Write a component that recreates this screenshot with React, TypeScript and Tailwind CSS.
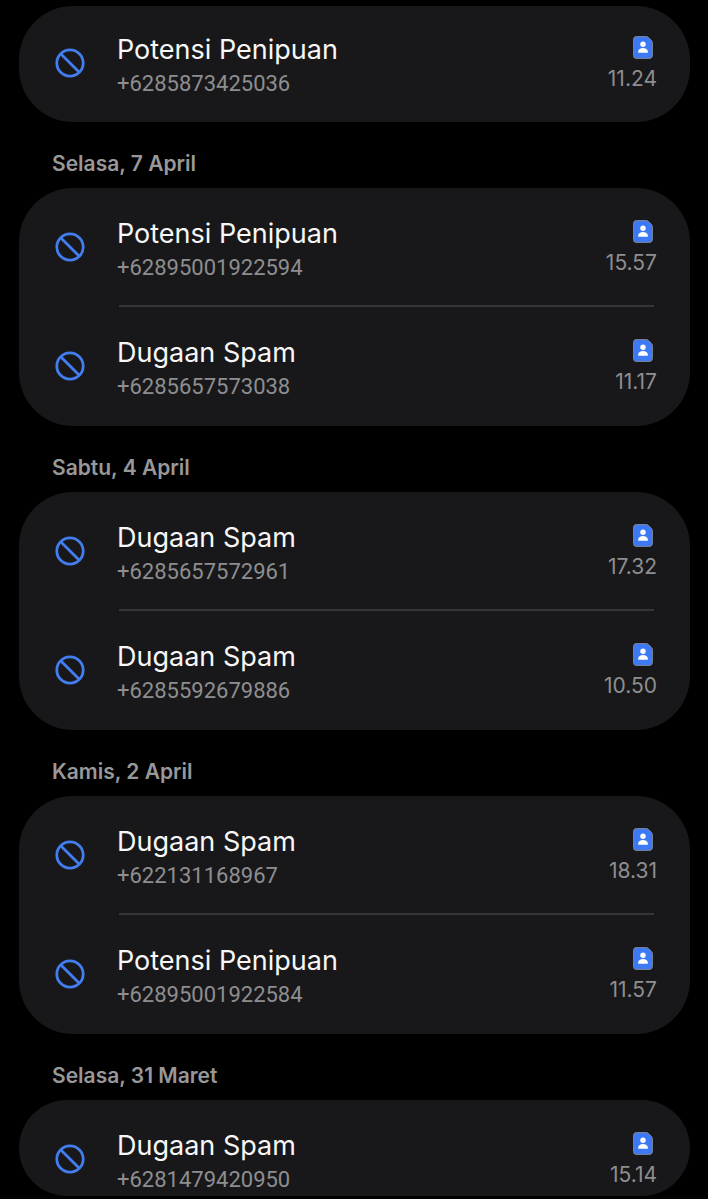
type Call = { name: string; number: string; time: string };

const groups: { date?: string; calls: Call[] }[] = [
    { calls: [{ name: 'Potensi Penipuan', number: '+6285873425036', time: '11.24' }] },
    {
        date: 'Selasa, 7 April',
        calls: [
            { name: 'Potensi Penipuan', number: '+62895001922594', time: '15.57' },
            { name: 'Dugaan Spam', number: '+6285657573038', time: '11.17' }
        ]
    },
    {
        date: 'Sabtu, 4 April',
        calls: [
            { name: 'Dugaan Spam', number: '+6285657572961', time: '17.32' },
            { name: 'Dugaan Spam', number: '+6285592679886', time: '10.50' }
        ]
    },
    {
        date: 'Kamis, 2 April',
        calls: [
            { name: 'Dugaan Spam', number: '+622131168967', time: '18.31' },
            { name: 'Potensi Penipuan', number: '+62895001922584', time: '11.57' }
        ]
    },
    {
        date: 'Selasa, 31 Maret',
        calls: [{ name: 'Dugaan Spam', number: '+6281479420950', time: '15.14' }]
    }
];

function BlockedIcon() {
    return (
        <svg
            viewBox="0 0 30 30"
            className="mt-11 h-[30px] w-[30px] shrink-0 group-first/section:mt-[42px]"
            fill="none"
            stroke="#437df0"
            strokeWidth="2.8"
        >
            <circle cx="15" cy="15" r="13.2" />
            <path d="M5.7 5.7 24.3 24.3" />
        </svg>
    );
}

function SimIcon() {
    return (
        <svg viewBox="0 0 20 23" className="mr-1 h-[23px] w-5">
            <path
                d="M3.2.6h10.3c.8 0 1.4.3 2 .9l3 3c.6.6.9 1.2.9 2v12.9a3 3 0 0 1-3 3H3.2a2.6 2.6 0 0 1-2.6-2.6V3.2A2.6 2.6 0 0 1 3.2.6Z"
                fill="#3d78f5"
                stroke="#7d8798"
                strokeWidth="1"
            />
            <circle cx="10" cy="8.3" r="2.7" fill="#fff" />
            <path d="M5.2 16.8v-1.3c0-2.3 2.3-3.5 4.8-3.5s4.8 1.2 4.8 3.5v1.3Z" fill="#fff" />
        </svg>
    );
}

function CallRow({ call }: { call: Call }) {
    return (
        <li className="group/row relative flex h-[119px] pr-[33px] pl-9 group-first/section:h-[116px] group-last/section:h-24">
            <BlockedIcon />
            <div className="ml-8 min-w-0 flex-1 pt-7 group-first/section:pt-[26px]">
                <p className="truncate font-[Inter] text-[27px] leading-9 text-[#f7f7f7]">{call.name}</p>
                <p className="font-[Roboto] text-[22px] leading-8 text-[#8e8e90]">{call.number}</p>
            </div>
            <div className="flex flex-col items-end pt-8 group-first/section:pt-[30px]">
                <SimIcon />
                <time className="mt-1 font-[Inter] text-[21px] leading-8 text-[#8e8e90]">{call.time}</time>
            </div>
            {/* Divider between rows */}
            <div className="absolute right-9 bottom-0 left-[100px] h-0.5 bg-[#363638] group-last/row:hidden" />
        </li>
    );
}

export default function App() {
    return (
        <main className="min-h-screen bg-black pt-1.5 pr-[18px] pl-[19px]">
            {groups.map((group) => (
                <section key={group.calls[0].number} className="group/section">
                    {group.date && (
                        <h2 className="pt-[26px] pb-2 pl-[33px] font-[Inter] text-[21px] leading-8 font-semibold text-[#98989a]">
                            {group.date}
                        </h2>
                    )}
                    <ul className="overflow-hidden rounded-[54px] bg-[#18181a]">
                        {group.calls.map((call) => (
                            <CallRow key={call.number} call={call} />
                        ))}
                    </ul>
                </section>
            ))}
        </main>
    );
}
